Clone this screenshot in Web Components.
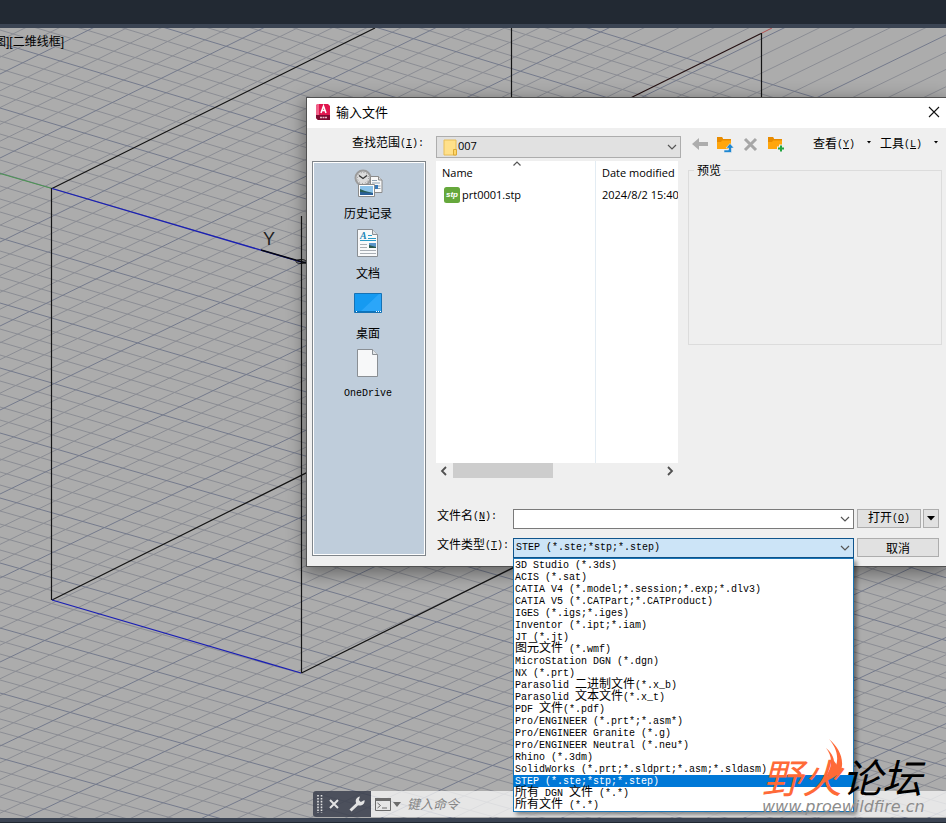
<!DOCTYPE html>
<html lang="zh-CN">
<head>
<meta charset="utf-8">
<title>输入文件</title>
<style>
    html, body{
        height:100%;
        margin:0;
    }
    body{
        font:10px/14px "Liberation Mono", "Noto Sans CJK SC", monospace;
        color:#000;
        background:#222933;
    }
</style>
</head>
<body>
<cad-app>
    <cad-viewport>图][二维线框]</cad-viewport>
    <command-line slot="over"></command-line>
    <file-dialog slot="over" heading="输入文件"></file-dialog>
    <site-watermark slot="over"></site-watermark>
</cad-app>

<script>
// half-width text is 10px mono (6px a letter), Chinese is 12px
const base = `
    *{ box-sizing:border-box; }
    .zh{
        font-family:"Noto Sans CJK SC", sans-serif;
        font-size:12px;
        line-height:12px;
        vertical-align:-1px;
    }
    button, input, select{
        font:inherit;
        color:inherit;
        margin:0;
        padding:0;
        border:0;
        background:none;
        outline:none;
        border-radius:0;
        appearance:none;
    }
    svg{ display:block; }
`

const mixed = text => text.replace(/[\u4e00-\u9fff]+/g, run => `<span class="zh">${run}</span>`)

class BaseElement extends HTMLElement{
    constructor(){
        super()
        this.attachShadow({mode:'open'})
    }

    connectedCallback(){
        this.shadowRoot.innerHTML = `<style>${base}${this.styles()}</style>${this.template()}`
    }

    styles(){ return '' }
    template(){ return '<slot></slot>' }
}

class CadApp extends BaseElement{
    styles(){
        return `
            :host{
                display:flex;
                flex-direction:column;
                height:100vh;
                overflow:hidden;
            }
            header{
                height:28px;
                background:#222933;
                border-bottom:4px solid #3b4453;
            }
            main{
                flex:1;
                min-height:0;
                position:relative;
                display:flex;
            }
            footer{
                height:5px;
                background:#222933;
                border-top:4px solid #3b4453;
            }
        `
    }
    template(){
        return `
            <header></header>
            <main><slot></slot><slot name="over"></slot></main>
            <footer></footer>
        `
    }
}

class CadViewport extends BaseElement{
    styles(){
        return `
            :host{
                display:block;
                flex:1;
                position:relative;
                overflow:hidden;
                background:#acacac;
            }
            .scene{ width:100%; height:100%; }
            .caption{
                position:absolute;
                top:6px;
                left:0;
                width:64px;
                display:flex;
                justify-content:flex-end;
                white-space:nowrap;
                font:12px/16px "Liberation Sans", "Noto Sans CJK SC", sans-serif;
            }
        `
    }

    grid(){
        let minor = ''
        let major = ''
        const add = (i, d) => {
            if(i % 5 === 0) major += d
            else minor += d
        }
        for(let i = -25; i < 55; i++){
            const y = 173 + i * 13
            const slope = 0.301 - y * 0.000035
            add(i, `M0 ${y.toFixed(1)}L1000 ${(y + slope * 1000).toFixed(1)}`)
        }
        for(let i = -5; i < 75; i++){
            const y = 74 + i * 16.8
            const slope = 0.498 - y * 0.000026
            add(i, `M0 ${y.toFixed(1)}L1000 ${(y - slope * 1000).toFixed(1)}`)
        }
        return `
            <path d="${minor}" stroke="#8b8d94"/>
            <path d="${major}" stroke="#747a8c"/>
        `
    }

    template(){
        return `
            <svg class="scene" fill="none" aria-hidden="true">
                <g transform="translate(0 -28)">
                    ${this.grid()}
                    <path d="M0 173.5L52 188.5" stroke="#4b9650"/>
                    <path d="M761 33.5L772 28" stroke="#b05050"/>
                    <g stroke="#141414" stroke-width="1.2">
                        <path d="M52 188.5L375 28M51.5 188V600M52 600L560 346M301.5 216V673M301.5 673L800 425M511.500 28V110M761.500 33V110"/>
                        <path d="M761 33.500L600 113" stroke="#241012"/>
                    </g>
                    <path d="M52 188.500L301 262M52 600L301 673" stroke="#1a1fb4" stroke-width="1.300"/>
                    <path d="M261 250L306 263" stroke="#05060f" stroke-width="1.500"/>
                    <ellipse cx="301" cy="261.500" rx="5" ry="2" stroke="#111"/>
                    <text x="263" y="245" fill="#222" font-family="Liberation Sans, sans-serif" font-size="18">Y</text>
                </g>
            </svg>
            <div class="caption"><slot></slot></div>
        `
    }
}

const icons = {
    app:[16, 18, `
        <path d="M2 1h11l2 2v14H3l-2-2V3z" fill="#e0174f"/>
        <path d="M2 1h2v15l-3-2V3z" fill="#f0638a"/>
        <path d="M1 12h14v5H3l-2-2z" fill="#7c0b30"/>
        <path d="M6 10l2.500-7 2.500 7M7 7.500h3" stroke="#fff" stroke-width="1.500" fill="none"/>
        <path d="M5 14.500h7" stroke="#e9b9c8" stroke-width="1.500" stroke-dasharray="2 .5"/>`],
    close:[12, 12, `<path d="M1 1l10 10M11 1L1 11" stroke="#111" stroke-width="1.100"/>`],
    chevron:[10, 6, `<path d="M1 1l4 4 4-4" fill="none" stroke="#555" stroke-width="1.200"/>`],
    caret:[4, 6, `<path d="M0 0h4L2 2.500z" fill="#000"/>`],
    caretbig:[8, 5, `<path d="M0 0h8L4 4.500z" fill="#000"/>`],
    left:[8, 10, `<path d="M6 1L2 5l4 4" fill="none" stroke="#505050" stroke-width="1.800"/>`],
    right:[8, 10, `<path d="M2 1l4 4-4 4" fill="none" stroke="#505050" stroke-width="1.800"/>`],
    sort:[8, 5, `<path d="M.5 4.500L4 1l3.500 3.500" fill="none" stroke="#555" stroke-width="1.200"/>`],
    folder:[14, 18, `
        <path d="M1 2h12v15H1z" fill="#ffe08a" stroke="#e8bd57"/>
        <path d="M10.500 11.500h3v5.500h-3z" fill="#ffd667" stroke="#dba937"/>`],
    back:[16, 16, `<path d="M0 8l7-6v4h9v4H7v4z" fill="#adadad"/>`],
    up:[16, 16, `
        <path d="M0 1h5l1 2h8v10H0z" fill="#ffa60d"/>
        <path d="M0 1h5l1 2h8v1.500H5L4 6H0z" fill="#e88b00"/>
        <path d="M7 16.500h7.500V12H17l-4-4.500L9 12h2.500v2H7z" fill="#1d87d2" stroke="#efefef" stroke-width=".6"/>`],
    remove:[16, 16, `<path d="M3 3l11 11M14 3L3 14" stroke="#a6a6a6" stroke-width="3"/>`],
    create:[16, 16, `
        <path d="M1 1h5l1 2h8v10H1z" fill="#ffa60d"/>
        <path d="M1 1h5l1 2h8v1.500H6L5 6H1z" fill="#e88b00"/>
        <path d="M14 8.500v8M10 12.500h8" stroke="#efefef" stroke-width="4"/>
        <path d="M14 9.500v6M11 12.500h6" stroke="#23a542" stroke-width="2"/>`],
    stp:[16, 16, `
        <rect width="16" height="16" rx="2.500" fill="#66a83c"/>
        <text x="8" y="10" fill="#fff" text-anchor="middle" font-family="Liberation Sans, sans-serif" font-size="8" font-style="italic" font-weight="700">stp</text>`],
    history:[32, 32, `
        <circle cx="11" cy="11" r="7.500" fill="#dcdcdc" stroke="#9b9b9b" stroke-width="2"/>
        <circle cx="11" cy="11" r="5.500" fill="none" stroke="#777" stroke-dasharray=".7 2.180"/>
        <path d="M7 8.500l4 3 4-3" fill="none" stroke="#333" stroke-width="1.300"/>
        <path d="M18.500 9.500h8l3.500 3.500v12.500H18.500z" fill="#f8f8f8" stroke="#8b8b8b"/>
        <path d="M26.500 9.500V13H30" fill="#ddd" stroke="#8b8b8b"/>
        <path d="M20 13.500h5M20 16h8M25 19h3.500M25 21.500h3.500" stroke="#8fa1b2"/>
        <path d="M22 18h4v4h-4z" fill="#3778b8"/>
        <path d="M6.500 17.500h16v12h-16z" fill="#fff" stroke="#8b8b8b"/>
        <path d="M8 19h13v9H8z" fill="#8cc3ea"/>
        <path d="M8 22l5 2 8 2v2H8z" fill="#295d52"/>
        <path d="M8 25l13 1v2H8z" fill="#2a6099"/>`],
    documents:[32, 32, `
        <path d="M5.500 2.500h15l5 5v22h-20z" fill="#f8f9fa" stroke="#8a8f94"/>
        <path d="M20.500 2.500v5h5" fill="#d9dfe4" stroke="#8a8f94"/>
        <text x="8" y="12" fill="#1c86b8" font-family="Liberation Serif, serif" font-size="10" font-style="italic" font-weight="700">A</text>
        <path d="M16 8.500h4M16 11.500h8M8 13.500h16" stroke="#299bc8"/>
        <path d="M8 17.500h7M8 20.500h7M8 23.500h16M8 26.500h16" stroke="#a9afb5"/>
        <path d="M17 16h7v5h-7z" fill="#5a95c9"/><path d="M17 18l7 2v1h-7z" fill="#29584d"/>`],
    desktop:[32, 32, `
        <path d="M2.500 6.500h27v19h-27z" fill="#159af1" stroke="#1672b5"/>
        <path d="M8 25L27 7h2v18z" fill="#3aafff" opacity=".6"/>
        <path d="M3 24.500h26" stroke="#0b74bd"/>
        <path d="M4 24.500h1M24 24.500h1M26 24.500h1M28 24.500h1" stroke="#fff"/>`],
    page:[32, 32, `
        <path d="M5.500 2.500h15l5 5v22h-20z" fill="#f7f8f9" stroke="#8a8f94"/>
        <path d="M20.500 2.500v5h5" fill="#e2e6e9" stroke="#8a8f94"/>`],
    grip:[6, 18, `<path d="M1 0v18M4.500 0v18" stroke="#e4e4e4" stroke-width="1.600" stroke-dasharray="1.600 1.300"/>`],
    cross:[10, 10, `<path d="M1 1l8 8M9 1L1 9" stroke="#e3e3e3" stroke-width="2"/>`],
    wrench:[16, 16, `<path d="M1.500 14.500L10 6.500" stroke="#e3e3e3" stroke-width="3"/><path d="M15.500 4A4.500 4.500 0 1 1 11 .6L9.800 4l2 2z" fill="#e3e3e3"/>`],
    prompt:[16, 13, `
        <path d="M.5 .5h15v12H.5z" fill="none" stroke="#6b6b6b"/>
        <path d="M0 0h16v3H0z" fill="#6b6b6b"/>
        <path d="M2.500 5l3 2.500-3 2.500M7 10h5" fill="none" stroke="#6b6b6b"/>`],
    caretgray:[8, 5, `<path d="M0 0h8L4 5z" fill="#6b6b6b"/>`]
}

class UiIcon extends BaseElement{
    styles(){
        return `:host{ display:block; flex:none; }`
    }
    template(){
        const [w, h, shapes] = icons[this.getAttribute('name')]
        return `<svg width="${w}" height="${h}" viewBox="0 0 ${w} ${h}" overflow="visible" aria-hidden="true">${shapes}</svg>`
    }
}

class PlaceItem extends BaseElement{
    styles(){
        return `
            :host{ display:block; }
            button{
                width:100%;
                height:60px;
                padding-top:4px;
                display:flex;
                flex-direction:column;
                align-items:center;
                gap:8px;
            }
        `
    }
    template(){
        return `
            <button type="button">
                <ui-icon name="${this.getAttribute('icon')}"></ui-icon>
                <span>${mixed(this.getAttribute('label'))}</span>
            </button>
        `
    }
}

class TypeList extends BaseElement{
    styles(){
        return `
            :host{ display:block; }
            ul{
                list-style:none;
                margin:0;
                padding:0 1px;
                background:#fff;
                border:1px solid #1a74b5;
                box-shadow:3px 3px 4px rgba(0,0,0,.4);
            }
            li{
                height:12px;
                line-height:14px;
                white-space:pre;
            }
            li .zh{
                line-height:0;
                vertical-align:baseline;
            }
            li[aria-selected=true]{
                margin:0 -1px;
                padding:0 1px;
                background:#0078d7;
                color:#fff;
            }
        `
    }
    template(){
        const types = [
            '3D Studio (*.3ds)',
            'ACIS (*.sat)',
            'CATIA V4 (*.model;*.session;*.exp;*.dlv3)',
            'CATIA V5 (*.CATPart;*.CATProduct)',
            'IGES (*.igs;*.iges)',
            'Inventor (*.ipt;*.iam)',
            'JT (*.jt)',
            '图元文件 (*.wmf)',
            'MicroStation DGN (*.dgn)',
            'NX (*.prt)',
            'Parasolid 二进制文件(*.x_b)',
            'Parasolid 文本文件(*.x_t)',
            'PDF 文件(*.pdf)',
            'Pro/ENGINEER (*.prt*;*.asm*)',
            'Pro/ENGINEER Granite (*.g)',
            'Pro/ENGINEER Neutral (*.neu*)',
            'Rhino (*.3dm)',
            'SolidWorks (*.prt;*.sldprt;*.asm;*.sldasm)',
            'STEP (*.ste;*stp;*.step)',
            '所有 DGN 文件 (*.*)',
            '所有文件 (*.*)'
        ]
        const value = this.getAttribute('value')
        return `<ul role="listbox">${types.map(type =>
            `<li role="option" aria-selected="${type === value}">${mixed(type)}</li>`).join('')}</ul>`
    }
}

class FileDialog extends BaseElement{
    styles(){
        return `
            :host{
                position:absolute;
                top:69px;
                left:306px;
                right:0;
                display:block;
                background:#efefef;
                border:1px solid #505050;
                border-right:0;
                box-shadow:0 5px 16px 2px rgba(0,0,0,.4);
            }
            .title{
                height:30px;
                padding:0 6px 2px 8px;
                display:flex;
                align-items:center;
                gap:5px;
                background:#fff;
            }
            h1{
                flex:1;
                margin:0;
                font:13px/20px "Noto Sans CJK SC", sans-serif;
            }
            form{
                display:grid;
                grid-template-columns:114px minmax(0, 1fr);
                column-gap:10px;
                row-gap:3px;
                padding:8px 4px 8px 5px;
            }
            .look{
                text-align:right;
                padding-right:2px;
                white-space:nowrap;
            }
            .top, .tools, .panes, .combo, .buttons{ display:flex; }
            .top{ align-items:flex-start; gap:11px; }
            .combo{
                align-items:center;
                position:relative;
                height:20px;
                padding:0 3px 0 2px;
                border:1px solid #7a7a7a;
                background:#fff;
            }
            .combo input, .combo select{
                flex:1;
                min-width:0;
                height:100%;
            }
            .folder{
                width:245px;
                height:22px;
                padding-left:6px;
                gap:1px;
                border-color:#adadad;
                background:#e1e1e1;
                font:11px/18px "Open Sans", sans-serif;
            }
            .folder select{ padding-bottom:2px; }
            .type{
                background:#cce4f7;
                border-color:#0f548c;
            }
            type-list{
                position:absolute;
                top:19px;
                left:-1px;
                right:-1px;
            }
            .tools{ gap:9px; height:16px; align-items:center; }
            .menu{
                display:flex;
                align-items:center;
                gap:12px;
                white-space:nowrap;
            }
            .menu:nth-of-type(5){ margin-left:21px; }
            .places{
                margin-bottom:2px;
                border:1px solid #7f858a;
                box-shadow:inset 0 0 0 1px #fff;
                padding:1px 3px 1px 1px;
                background:#bfcddb;
            }
            .panes{ gap:10px; align-items:flex-start; }
            .list{ width:242px; }
            .files{
                min-height:302px;
                position:relative;
                background:linear-gradient(#e3ecf3, #e3ecf3) 159px 0 / 1px 100% no-repeat #fff;
                overflow:hidden;
            }
            .files > ui-icon{
                position:absolute;
                top:0;
                left:77px;
            }
            table{
                width:100%;
                table-layout:fixed;
                border-collapse:collapse;
                font:11px/22px "Open Sans", sans-serif;
            }
            th, td{
                height:22px;
                padding:0 0 0 6px;
                font-weight:400;
                text-align:left;
                white-space:nowrap;
            }
            thead th{ padding-top:2px; line-height:20px; }
            tbody td{ height:24px; }
            th:first-child{ width:160px; }
            .file{
                display:flex;
                align-items:center;
                gap:2px;
                padding-left:2px;
            }
            .scroll{
                height:16px;
                display:flex;
                align-items:center;
                padding:0 4px;
                gap:5px;
            }
            .scroll span{ flex:1; height:100%; }
            .scroll i{
                display:block;
                width:100px;
                height:15px;
                background:#cdcdcd;
            }
            fieldset{
                flex:1;
                min-width:0;
                min-height:181px;
                margin:3px 0 0;
                padding:0;
                border:1px solid #dcdcdc;
            }
            legend{
                margin-left:5px;
                padding:0 3px;
            }
            .fields{
                display:grid;
                grid-template-columns:74px minmax(0, 1fr) 82px;
                gap:9px 3px;
                margin-top:30px;
                padding:0 3px 0 0;
            }
            .fields label{ padding-left:1px; white-space:nowrap; }
            .buttons{ gap:2px; }
            .push{
                height:19px;
                flex:1;
                display:flex;
                align-items:center;
                justify-content:center;
                border:1px solid #adadad;
                background:#e1e1e1;
            }
            .more{ flex:none; width:16px; }
        `
    }

    template(){
        const tool = (icon, label) => `<button type="button" aria-label="${label}"><ui-icon name="${icon}"></ui-icon></button>`
        const menu = (text, key) => `<button type="button" class="menu"><span><span class="zh">${text}</span>(<u>${key}</u>)</span><ui-icon name="caret"></ui-icon></button>`
        return `
            <div class="title">
                <ui-icon name="app"></ui-icon>
                <h1>${this.getAttribute('heading')}</h1>
                ${tool('close', '关闭')}
            </div>
            <form>
                <label class="look" for="look"><span class="zh">查找范围</span>(<u>I</u>):</label>
                <div class="top">
                    <div class="combo folder">
                        <ui-icon name="folder"></ui-icon>
                        <select id="look"><option>007</option></select>
                        <ui-icon name="chevron"></ui-icon>
                    </div>
                    <div class="tools">
                        ${tool('back', '后退')}
                        ${tool('up', '上一级')}
                        ${tool('remove', '删除')}
                        ${tool('create', '创建新文件夹')}
                        ${menu('查看', 'Y')}
                        ${menu('工具', 'L')}
                    </div>
                </div>
                <nav class="places">
                    <place-item icon="history" label="历史记录"></place-item>
                    <place-item icon="documents" label="文档"></place-item>
                    <place-item icon="desktop" label="桌面"></place-item>
                    <place-item icon="page" label="OneDrive"></place-item>
                </nav>
                <div>
                    <div class="panes">
                        <div class="list">
                            <div class="files">
                                <ui-icon name="sort"></ui-icon>
                                <table>
                                    <thead><tr><th>Name</th><th>Date modified</th></tr></thead>
                                    <tbody><tr>
                                        <td><span class="file"><ui-icon name="stp"></ui-icon>prt0001.stp</span></td>
                                        <td>2024/8/2 15:40</td>
                                    </tr></tbody>
                                </table>
                            </div>
                            <div class="scroll">
                                <ui-icon name="left"></ui-icon>
                                <span><i></i></span>
                                <ui-icon name="right"></ui-icon>
                            </div>
                        </div>
                        <fieldset><legend class="zh">预览</legend></fieldset>
                    </div>
                    <div class="fields">
                        <label for="name"><span class="zh">文件名</span>(<u>N</u>):</label>
                        <div class="combo">
                            <input id="name" type="text">
                            <ui-icon name="chevron"></ui-icon>
                        </div>
                        <div class="buttons">
                            <button type="button" class="push"><span><span class="zh">打开</span>(<u>O</u>)</span></button>
                            <button type="button" class="push more" aria-label="打开选项"><ui-icon name="caretbig"></ui-icon></button>
                        </div>
                        <label for="type"><span class="zh">文件类型</span>(<u>T</u>):</label>
                        <div class="combo type">
                            <select id="type"><option>STEP (*.ste;*stp;*.step)</option></select>
                            <ui-icon name="chevron"></ui-icon>
                            <type-list value="STEP (*.ste;*stp;*.step)"></type-list>
                        </div>
                        <div class="buttons">
                            <button type="button" class="push zh">取消</button>
                        </div>
                    </div>
                </div>
            </form>
        `
    }
}

class CommandLine extends BaseElement{
    styles(){
        return `
            :host{
                position:absolute;
                left:313px;
                right:0;
                bottom:1px;
                height:26px;
                display:flex;
            }
            .handle{
                width:58px;
                display:flex;
                align-items:center;
                gap:6px;
                padding-left:4px;
                border-radius:3px 0 0 3px;
                background:rgba(59,64,77,.85);
            }
            .handle ui-icon:last-child{ margin-left:4px; }
            .entry{
                flex:1;
                display:flex;
                align-items:center;
                gap:2px;
                padding-left:4px;
                background:rgba(255,255,255,.7);
            }
            input{
                flex:1;
                margin-left:4px;
                font:italic 13px/20px "Noto Sans CJK SC", sans-serif;
            }
            input::placeholder{ color:#858585; }
        `
    }
    template(){
        return `
            <div class="handle">
                <ui-icon name="grip"></ui-icon>
                <ui-icon name="cross"></ui-icon>
                <ui-icon name="wrench"></ui-icon>
            </div>
            <div class="entry">
                <ui-icon name="prompt"></ui-icon>
                <ui-icon name="caretgray"></ui-icon>
                <input type="text" placeholder="键入命令" aria-label="键入命令">
            </div>
        `
    }
}

class SiteWatermark extends BaseElement{
    styles(){
        return `
            :host{
                position:absolute;
                right:20px;
                bottom:3px;
                display:block;
                width:164px;
                pointer-events:none;
            }
            .name{
                font:italic 400 40px/44px "Noto Sans CJK SC", sans-serif;
                white-space:nowrap;
            }
            .fire{ color:#ff6a38; }
            .url{
                font:italic 16px/17px "DejaVu Sans", sans-serif;
                color:#8c8c8c;
            }
            svg{
                position:absolute;
                top:-15px;
                left:55px;
            }
        `
    }
    template(){
        return `
            <div class="name"><span class="fire">野火</span>论坛</div>
            <div class="url">www.proewildfire.cn</div>
            <svg width="28" height="46" viewBox="0 0 28 46" aria-hidden="true">
                <path d="M12 0C20 7 26 16 25 27C24 37 14 39 5 45C10 38 19 33 20 22C21 13 17 6 12 0Z" fill="#ff6a38"/>
                <path d="M9 9C14 13 18 19 17 26C16 32 12 37 7 41C10 35 14 30 14 23C14 17 12 13 9 9Z" fill="#ff6a38"/>
                <path d="M17 22L23 30C20 36 13 39 6 44C10 38 16 32 17 22Z" fill="#ff6a38"/>
            </svg>
        `
    }
}

customElements.define('ui-icon',UiIcon)
customElements.define('place-item',PlaceItem)
customElements.define('type-list',TypeList)
customElements.define('cad-viewport',CadViewport)
customElements.define('command-line',CommandLine)
customElements.define('file-dialog',FileDialog)
customElements.define('site-watermark',SiteWatermark)
customElements.define('cad-app',CadApp)
</script>
</body>
</html>
